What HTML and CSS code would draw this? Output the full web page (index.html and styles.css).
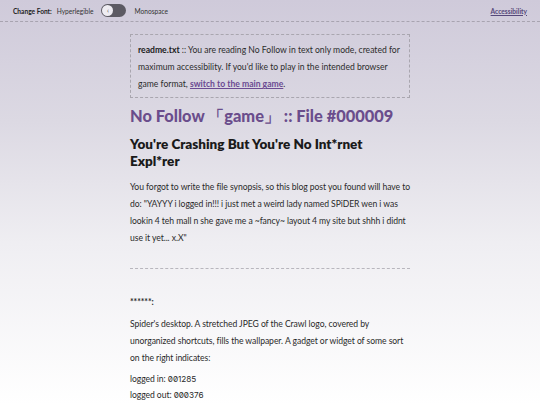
FILE: index.html
```html
<!DOCTYPE html>
<html>
<head>
<meta charset="utf-8">
<link rel="stylesheet" href="styles.css">
</head>
<body>
<header class="topbar">
  <div class="font-switch">
    <span class="label">Change Font:</span>
    <span class="opt">Hyperlegible</span>
    <span class="toggle"><span class="knob">‹</span></span>
    <span class="opt">Monospace</span>
  </div>
  <a class="a11y" href="#">Accessibility</a>
</header>
<main class="content">
  <div class="readme">
    <b>readme.txt</b> :: You are reading No Follow in text only mode, created for maximum accessibility. If you'd like to play in the intended browser game format, <a href="#" class="game-link">switch to the main game</a>.
  </div>
  <h1 class="title">No Follow 「game」 :: File #000009</h1>
  <h2 class="subtitle">You're Crashing But You're No Int*rnet Expl*rer</h2>
  <p>You forgot to write the file synopsis, so this blog post you found will have to do: "YAYYY i logged in!!! i just met a weird lady named SPiDER wen i was lookin 4 teh mall n she gave me a ~fancy~ layout 4 my site but shhh i didnt use it yet... x.X"</p>
  <hr class="sep">
  <p class="stars">******:</p>
  <p class="desc">Spider's desktop. A stretched JPEG of the Crawl logo, covered by unorganized shortcuts, fills the wallpaper. A gadget or widget of some sort on the right indicates:</p>
  <p class="tight">logged in: <span class="num">001285</span><br>logged out: <span class="num">000376</span></p>
</main>
</body>
</html>
```
FILE: styles.css
```css
html, body {
  margin: 0;
  padding: 0;
}
body {
  height: 405px;
  background: linear-gradient(to bottom, #cfcada 0%, #dcd9e3 30%, #efeef2 60%, #ffffff 100%);
  font-family: Lato, "Liberation Sans", sans-serif;
  color: #2a2a2a;
  overflow: hidden;
}
.topbar {
  display: flex;
  justify-content: space-between;
  align-items: center;
  height: 21px;
  padding: 0 13px;
  border-bottom: 1px dashed #a8a4b0;
  font-size: 6.6px;
}
.font-switch {
  display: flex;
  align-items: center;
  gap: 5px;
}
.label {
  font-weight: 700;
  color: #222;
}
.opt {
  color: #333;
}
.toggle {
  display: flex;
  align-items: center;
  width: 25px;
  height: 13px;
  border-radius: 7px;
  background: #5c5a63;
  padding: 0 1px;
  box-sizing: border-box;
  margin: 0 3px;
}
.knob {
  width: 11px;
  height: 11px;
  border-radius: 50%;
  background: #eeecf2;
  color: #555;
  font-size: 7px;
  line-height: 11px;
  text-align: center;
}
.a11y {
  color: #56487a;
  text-decoration: underline;
  font-weight: 700;
}
.content {
  width: 280px;
  margin: 12px auto 0;
  font-size: 8.6px;
  line-height: 17px;
}
.readme {
  border: 1px dashed #a9a6af;
  padding: 7px 7px 4px;
  color: #2c2c2c;
}
.readme b {
  color: #1c1c1c;
}
.game-link {
  color: #6b4a92;
  font-weight: 700;
  text-decoration: underline;
}
.title {
  margin: 6px 0 0;
  font-size: 16.4px;
  line-height: 24px;
  color: #6a4d8c;
  font-weight: 900;
}
.subtitle {
  margin: 8px 0 0;
  font-size: 13.5px;
  line-height: 17px;
  color: #1a1a1a;
  font-weight: 800;
}
p {
  margin: 9px 0 0;
  letter-spacing: -0.06px;
}
.sep {
  border: 0;
  border-top: 1px dashed #b8b6bd;
  margin: 21px 0 0;
}
.stars {
  margin-top: 25px;
  font-weight: 700;
}
.desc {
  margin-top: 5px;
}
.tight {
  margin-top: 4px;
  line-height: 16px;
}
.num {
  font-family: Inter, Lato, sans-serif;
  font-size: 8.2px;
  font-feature-settings: "zero" 1;
}
```
